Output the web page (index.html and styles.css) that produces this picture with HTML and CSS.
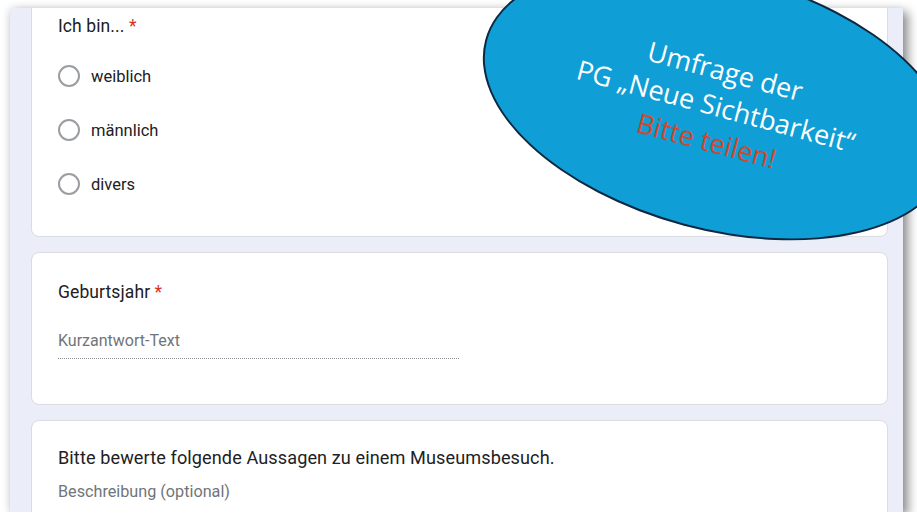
FILE: index.html
```html
<!DOCTYPE html>
<html lang="de">

<head>
    <meta charset="UTF-8">
    <meta name="viewport" content="width=device-width, initial-scale=1.0">
    <title>Umfrage</title>
    <link rel="stylesheet" href="styles.css">
</head>

<body>
    <div class="shot">
        <div class="cards">
            <!-- Frage 1 -->
            <div class="card">
                <p class="q-title">Ich bin... <span class="req">*</span></p>
                <ul class="options">
                    <li><span class="radio"></span>weiblich</li>
                    <li><span class="radio"></span>männlich</li>
                    <li><span class="radio"></span>divers</li>
                </ul>
            </div>

            <!-- Frage 2 -->
            <div class="card">
                <p class="q-title">Geburtsjahr <span class="req">*</span></p>
                <div class="short-answer">Kurzantwort-Text</div>
            </div>

            <!-- Abschnitt -->
            <div class="card card-last">
                <p class="q-title section-title">Bitte bewerte folgende Aussagen zu einem Museumsbesuch.</p>
                <p class="desc">Beschreibung (optional)</p>
            </div>
        </div>

        <!-- Sprechblase -->
        <div class="bubble">
            <p>Umfrage der</p>
            <p>PG „Neue Sichtbarkeit“</p>
            <p class="share">Bitte teilen!</p>
        </div>
    </div>
</body>

</html>
```

FILE: styles.css
```css
html,
body {
    margin: 0;
    padding: 0;
}

body {
    background: #fff;
    font-family: Roboto, "Liberation Sans", sans-serif;
    color: #202124;
    overflow: hidden;
}

p,
ul,
li {
    margin: 0;
    padding: 0;
    list-style: none;
}

/* Screenshot-Rahmen */
.shot {
    position: relative;
    width: 893px;
    height: 504px;
    margin: 8px 0 0 10px;
    background: #ebeef8;
    box-shadow: 5px 4px 10px rgba(0, 0, 0, 0.45), -2px 0 8px rgba(0, 0, 0, 0.08);
}

.cards {
    height: 100%;
    overflow: hidden;
    padding: 0 15px 0 21px;
    box-sizing: border-box;
}

.card {
    background: #fff;
    border: 1px solid #dadce0;
    border-radius: 8px;
    padding: 27px 26px 45px;
}

.card + .card {
    margin-top: 15px;
}

.card:first-child {
    margin-top: -19px;
    padding-top: 24px;
    padding-bottom: 25px;
}

.q-title {
    font-size: 17.5px;
    line-height: 24px;
    letter-spacing: 0.1px;
}

.req {
    color: #d93025;
}

/* Auswahl */
.options {
    margin-top: 11px;
}

.options li {
    display: flex;
    align-items: center;
    height: 54px;
    font-size: 16.5px;
}

.radio {
    width: 22px;
    height: 22px;
    box-sizing: border-box;
    border: 2px solid #9a9da1;
    border-radius: 50%;
    margin-right: 11px;
}

/* Kurzantwort */
.short-answer {
    width: 401px;
    margin-top: 27px;
    padding-bottom: 7px;
    border-bottom: 1px dotted #8a8e93;
    font-size: 16px;
    line-height: 20px;
    color: #70757a;
}

.card-last {
    padding-top: 25px;
    padding-bottom: 60px;
}

.section-title {
    font-size: 18.1px;
}

.desc {
    margin-top: 12px;
    font-size: 16.2px;
    line-height: 20px;
    color: #70757a;
}

/* Ellipse */
.bubble {
    position: absolute;
    left: 467px;
    top: -34px;
    width: 480px;
    height: 256px;
    box-sizing: border-box;
    border: 2px solid #0e2841;
    border-radius: 50%;
    background: #0f9ed5;
    transform: rotate(15deg);
    display: flex;
    flex-direction: column;
    align-items: center;
    justify-content: center;
    padding-top: 8px;
    font-family: "Open Sans", sans-serif;
    font-size: 27px;
    line-height: 36px;
    color: #fff;
}

.share {
    color: #d4472c;
}
```
